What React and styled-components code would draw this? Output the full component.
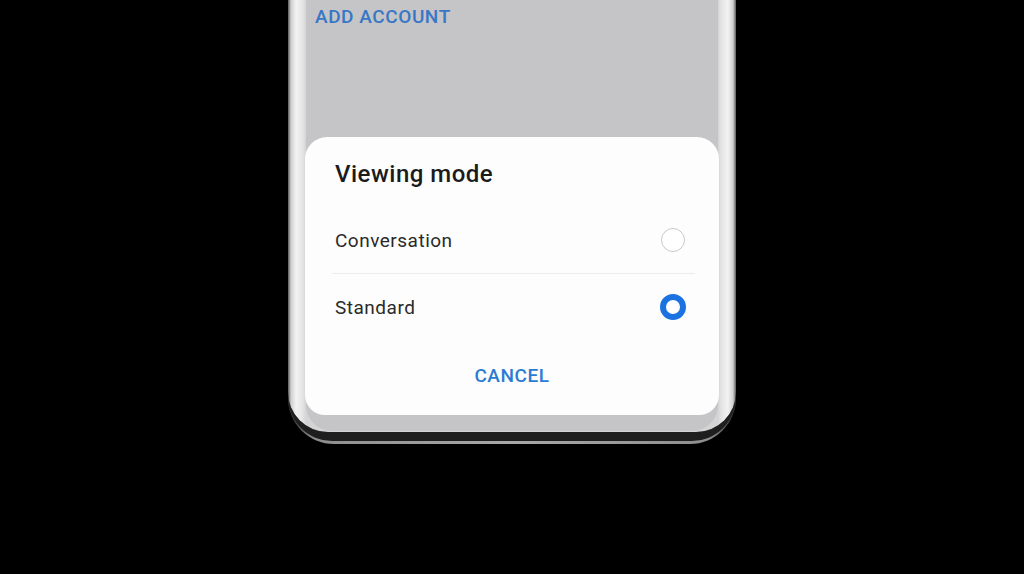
import React from "react";
import styled, { createGlobalStyle } from "styled-components";

const Global = createGlobalStyle`
  html, body { margin: 0; padding: 0; background: #000; }
  body { font-family: Roboto, "Noto Sans", "Liberation Sans", sans-serif; }
  #root { height: 574px; overflow: hidden; }
`;

const Stage = styled.div`
  height: 574px;
  background: #000;
  display: flex;
  justify-content: center;
  align-items: flex-start;
`;

const Rim = styled.div`
  width: 448px;
  padding-bottom: 3px;
  border-radius: 0 0 46px 46px;
  background: linear-gradient(90deg, #3a3a3a 0, #8e8e8e 6%, #a8a8a8 50%, #8e8e8e 94%, #3a3a3a 100%);
`;

const Band = styled.div`
  padding-bottom: 9px;
  border-radius: 0 0 44px 44px;
  background: linear-gradient(180deg, #3a3a3a 0, #1e1e1e 100%);
`;

const Frame = styled.div`
  padding: 0 18px 1px;
  border-radius: 0 0 40px 40px;
  background: linear-gradient(
    90deg,
    #5a5a5a 0,
    #cfcfcf 3px,
    #f2f2f2 8px,
    #e6e6e6 14px,
    #d4d4d4 18px,
    #d4d4d4 calc(100% - 18px),
    #e6e6e6 calc(100% - 14px),
    #f2f2f2 calc(100% - 8px),
    #cfcfcf calc(100% - 3px),
    #5a5a5a 100%
  );
`;

const Screen = styled.div`
  height: 415px;
  padding-bottom: 16px;
  background: #c5c4c6;
  border-radius: 0 0 26px 26px;
  display: flex;
  flex-direction: column;
  justify-content: space-between;
`;

const AddAccount = styled.div`
  padding: 6px 9px 0;
  font-size: 19px;
  line-height: 22px;
  font-weight: 500;
  color: #3777c6;
  letter-spacing: 0.55px;
`;

const Dialog = styled.div`
  margin: 0 -1px;
  height: 278px;
  box-sizing: border-box;
  background: #fdfdfd;
  border-radius: 22px 22px 20px 20px;
  padding: 22px 0 19px;
  display: flex;
  flex-direction: column;
`;

const Title = styled.div`
  padding-left: 30px;
  font-size: 24px;
  line-height: 30px;
  font-weight: 500;
  color: #1b1b1b;
  letter-spacing: 0.5px;
  margin-bottom: 18px;
`;

const Row = styled.div`
  height: 66px;
  display: flex;
  align-items: center;
  justify-content: space-between;
  padding: 0 34px 0 30px;
  font-size: 19px;
  letter-spacing: 0.5px;
  color: #2a2a2a;
`;

const Divider = styled.div`
  height: 1px;
  background: #ececec;
  margin: 0 24px 0 27px;
`;

const Radio = styled.span`
  box-sizing: border-box;
  width: ${(p) => (p.$on ? 26 : 24)}px;
  height: ${(p) => (p.$on ? 26 : 24)}px;
  margin-right: ${(p) => (p.$on ? -1 : 0)}px;
  border-radius: 50%;
  border: ${(p) => (p.$on ? "6px solid #1b73e2" : "1.5px solid #c9c9c9")};
  background: #fff;
`;

const Cancel = styled.div`
  margin-top: 15px;
  height: 40px;
  display: flex;
  align-items: center;
  justify-content: center;
  font-size: 19px;
  font-weight: 500;
  color: #2b7bd3;
  letter-spacing: 0.55px;
`;

const options = [
  { label: "Conversation", on: false },
  { label: "Standard", on: true },
];

export default function App() {
  return (
    <>
      <Global />
      <Stage>
        <Rim>
          <Band>
            <Frame>
              <Screen>
                <AddAccount>ADD ACCOUNT</AddAccount>
                <Dialog>
                  <Title>Viewing mode</Title>
                  {options.map((o, i) => (
                    <React.Fragment key={o.label}>
                      {i > 0 && <Divider />}
                      <Row>
                        <span>{o.label}</span>
                        <Radio $on={o.on} />
                      </Row>
                    </React.Fragment>
                  ))}
                  <Cancel>CANCEL</Cancel>
                </Dialog>
              </Screen>
            </Frame>
          </Band>
        </Rim>
      </Stage>
    </>
  );
}
